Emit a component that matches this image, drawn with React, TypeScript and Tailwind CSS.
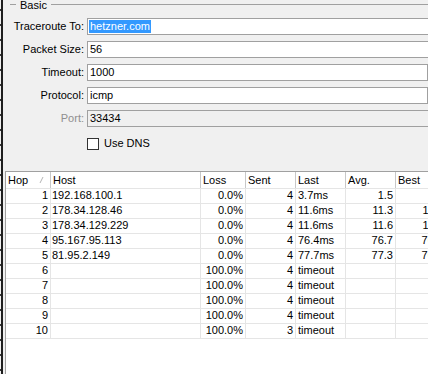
import React from 'react';

type Hop = {
  hop: number;
  host: string;
  loss: string;
  sent: number;
  last: string;
  avg: string;
  best: string;
};

const hops: Hop[] = [
  { hop: 1, host: '192.168.100.1', loss: '0.0%', sent: 4, last: '3.7ms', avg: '1.5', best: '1.3' },
  { hop: 2, host: '178.34.128.46', loss: '0.0%', sent: 4, last: '11.6ms', avg: '11.3', best: '11.1' },
  { hop: 3, host: '178.34.129.229', loss: '0.0%', sent: 4, last: '11.6ms', avg: '11.6', best: '11.5' },
  { hop: 4, host: '95.167.95.113', loss: '0.0%', sent: 4, last: '76.4ms', avg: '76.7', best: '76.3' },
  { hop: 5, host: '81.95.2.149', loss: '0.0%', sent: 4, last: '77.7ms', avg: '77.3', best: '76.9' },
  { hop: 6, host: '', loss: '100.0%', sent: 4, last: 'timeout', avg: '', best: '' },
  { hop: 7, host: '', loss: '100.0%', sent: 4, last: 'timeout', avg: '', best: '' },
  { hop: 8, host: '', loss: '100.0%', sent: 4, last: 'timeout', avg: '', best: '' },
  { hop: 9, host: '', loss: '100.0%', sent: 4, last: 'timeout', avg: '', best: '' },
  { hop: 10, host: '', loss: '100.0%', sent: 3, last: 'timeout', avg: '', best: '' },
];

const FieldRow = ({
  label,
  children,
  muted = false,
}: {
  label: string;
  children: React.ReactNode;
  muted?: boolean;
}) => (
  <div className="flex items-center h-[17px]">
    <div className={`w-[81px] shrink-0 text-right ${muted ? 'text-[#8f8f8f]' : 'text-black'}`}>{label}</div>
    <div className="ml-[3px] flex">{children}</div>
  </div>
);

const App = () => {
  return (
    <div className="w-[428px] h-[374px] overflow-hidden bg-[#f0f0f0] flex text-[11px] leading-[13px] text-black font-['Liberation_Sans',Arial,sans-serif]">
      {/* window edge */}
      <div className="w-[1px] shrink-0 flex flex-col pt-[9px]">
        {Array.from({ length: 25 }).map((_, i) => (
          <div key={i} className="h-[15px] shrink-0">
            <div className="w-[1px] h-[2px] bg-[#3a3a3a]"></div>
          </div>
        ))}
      </div>
      <div className="w-[2px] shrink-0 bg-[#1e1e1e]"></div>

      <div className="flex-1 min-w-0 flex flex-col">
        {/* Basic group */}
        <div className="h-[12px] flex items-start">
          <div className="mt-[4px] ml-[7px] w-[6px] h-px bg-[#a0a0a0]"></div>
          <span className="px-[4px] leading-[11px]">Basic</span>
          <div className="mt-[4px] flex-1 h-px bg-[#a0a0a0]"></div>
        </div>

        <div className="mt-[6px] flex flex-col gap-[6px]">
          <FieldRow label="Traceroute To:">
            <div className="w-[380px] shrink-0 h-[17px] border border-[#a0a0a0] bg-white pl-[1px] flex items-center">
              <span className="bg-[#3399ff] text-white px-[1px] leading-[13px]">hetzner.com</span>
            </div>
          </FieldRow>
          <FieldRow label="Packet Size:">
            <div className="w-[380px] shrink-0 h-[17px] border border-[#a0a0a0] bg-white pl-[2px] flex items-center">56</div>
          </FieldRow>
          <FieldRow label="Timeout:">
            <div className="w-[341px] shrink-0 h-[17px] border border-[#a0a0a0] bg-white pl-[2px] flex items-center">1000</div>
          </FieldRow>
          <FieldRow label="Protocol:">
            <div className="w-[341px] shrink-0 h-[17px] border border-[#a0a0a0] bg-white pl-[2px] flex items-center">icmp</div>
          </FieldRow>
          <FieldRow label="Port:" muted>
            <div className="w-[380px] shrink-0 h-[17px] border border-[#a0a0a0] bg-[#f0f0f0] pl-[2px] flex items-center">33434</div>
          </FieldRow>
        </div>

        <div className="mt-[10px] flex items-center ml-[84px]">
          <div className="w-[12px] h-[12px] border border-[#333333] bg-white"></div>
          <span className="ml-[5px]">Use DNS</span>
        </div>

        {/* Hops table */}
        <div className="mt-[21px] ml-[2px] flex-1 bg-white border-l border-t border-[#a0a0a0] flex flex-col">
          <div className="h-[17px] flex border-b border-[#e5e5e5] shrink-0">
            <div className="w-[45px] shrink-0 border-r border-[#c8c8c8] flex items-center pl-[2px]">
              <span>Hop</span>
              <svg className="ml-auto mr-[6px]" width="5" height="6" viewBox="0 0 5 6">
                <path d="M1 6 L4 0" stroke="#b4b4b4" strokeWidth="1" fill="none" />
              </svg>
            </div>
            <div className="w-[150px] shrink-0 border-r border-[#c8c8c8] flex items-center pl-[2px]">Host</div>
            <div className="w-[45px] shrink-0 border-r border-[#c8c8c8] flex items-center pl-[2px]">Loss</div>
            <div className="w-[50px] shrink-0 border-r border-[#c8c8c8] flex items-center pl-[2px]">Sent</div>
            <div className="w-[50px] shrink-0 border-r border-[#c8c8c8] flex items-center pl-[2px]">Last</div>
            <div className="w-[50px] shrink-0 border-r border-[#c8c8c8] flex items-center pl-[2px]">Avg.</div>
            <div className="w-[50px] shrink-0 border-r border-[#c8c8c8] flex items-center pl-[2px]">Best</div>
          </div>

          {hops.map((h) => (
            <div key={h.hop} className="h-[15px] flex border-b border-[#e5e5e5] shrink-0">
              <div className="w-[45px] shrink-0 border-r border-[#e5e5e5] text-right pr-[2px]">{h.hop}</div>
              <div className="w-[150px] shrink-0 border-r border-[#e5e5e5] pl-[1px] whitespace-nowrap">{h.host}</div>
              <div className="w-[45px] shrink-0 border-r border-[#e5e5e5] text-right pr-[2px] whitespace-nowrap">{h.loss}</div>
              <div className="w-[50px] shrink-0 border-r border-[#e5e5e5] text-right pr-[2px]">{h.sent}</div>
              <div className="w-[50px] shrink-0 border-r border-[#e5e5e5] pl-[2px] whitespace-nowrap">{h.last}</div>
              <div className="w-[50px] shrink-0 border-r border-[#e5e5e5] text-right pr-[2px]">{h.avg}</div>
              <div className="w-[50px] shrink-0 border-r border-[#e5e5e5] text-right pr-[2px]">{h.best}</div>
            </div>
          ))}
        </div>
      </div>
    </div>
  );
};

export default App;
